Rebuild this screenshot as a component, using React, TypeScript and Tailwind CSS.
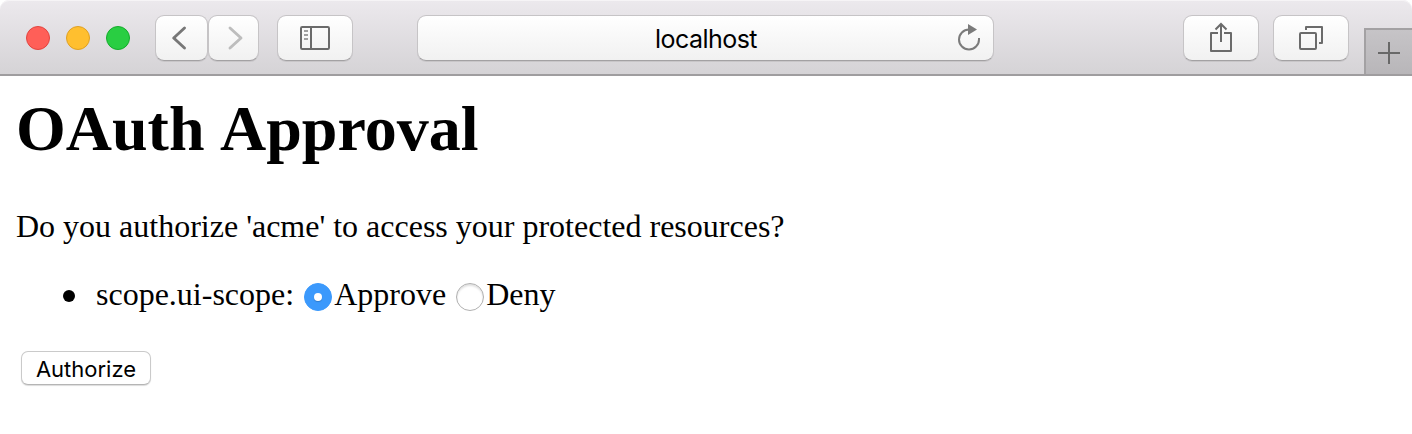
import { useState } from "react";
import type { ReactNode } from "react";

const face =
  "shrink-0 h-[46px] rounded-[9px] border border-[#c6c4c6] border-b-[#a3a1a3] bg-linear-to-b from-white to-[#f1f1f1] bg-clip-padding shadow-[0_1px_0_rgba(0,0,0,0.08)] flex items-center justify-center";

function ToolButton({ className, label, children }: { className: string; label: string; children: ReactNode }) {
  return (
    <button type="button" aria-label={label} className={`${face} ${className}`}>
      {children}
    </button>
  );
}

function Toolbar() {
  return (
    <header className="flex h-[76px] items-start overflow-hidden rounded-t-[9px] border-b-2 border-[#9f9d9f] bg-linear-to-b from-[#ece9ed] to-[#d5d3d6] pl-[26px] shadow-[inset_0_1px_0_#f6f4f6]">
      <div className="mt-[26px] flex gap-4">
        <span className="size-6 rounded-full border border-[#e2443f] bg-[#ff5f58]" />
        <span className="size-6 rounded-full border border-[#dfa023] bg-[#ffbf2f]" />
        <span className="size-6 rounded-full border border-[#14ac2b] bg-[#29ce42]" />
      </div>
      <div className="mt-[15px] ml-[25px] flex">
        <ToolButton label="Back" className="w-[53px]">
          <svg width="50" height="44" viewBox="0 0 50 44" fill="none" stroke="#777" strokeWidth="2.9" strokeLinecap="round" strokeLinejoin="round">
            <path d="M27.5 12 L16.7 22 L27.5 32" />
          </svg>
        </ToolButton>
        <ToolButton label="Forward" className="w-[51px]">
          <svg width="48" height="44" viewBox="0 0 48 44" fill="none" stroke="#bdbdbd" strokeWidth="2.9" strokeLinecap="round" strokeLinejoin="round">
            <path d="M20 12 L31 22 L20 32" />
          </svg>
        </ToolButton>
      </div>
      <ToolButton label="Sidebar" className="mt-[15px] ml-[18px] w-[76px]">
        <svg width="30" height="24" viewBox="0 0 30 24" fill="none" stroke="#6b6b6b" strokeWidth="2">
          <rect x="1" y="1" width="28" height="22" rx="1.2" />
          <path d="M11 1V23" />
          <path d="M4 5H8M4 9H8M4 13H8" stroke="#a0a0a0" />
        </svg>
      </ToolButton>
      <div className={`${face} mt-[15px] ml-16 w-[577px] pl-[37px]`}>
        <span className="flex-1 pt-0.5 text-center font-['Inter',sans-serif] text-[25px] tracking-[-0.55px] text-black">localhost</span>
        <svg className="mr-3 mb-0.5" width="24" height="28" viewBox="0 0 24 28" fill="none">
          <path d="M12 6.5A10 10 0 1 0 22 16.5V15" stroke="#7b7b7b" strokeWidth="2" />
          <path d="M11 1V12L20 6.5Z" fill="#7b7b7b" />
        </svg>
      </div>
      <ToolButton label="Share" className="mt-[15px] ml-[189px] w-[76px]">
        <svg width="24" height="32" viewBox="0 0 24 32" fill="none" stroke="#6b6b6b" strokeWidth="2">
          <path d="M9 11H2V29H22V11H15" strokeLinejoin="round" />
          <path d="M12 20V2" />
          <path d="M6.5 7.5L12 2L17.5 7.5" />
        </svg>
      </ToolButton>
      <ToolButton label="Show all tabs" className="mt-[15px] ml-[14px] w-[76px]">
        <svg width="26" height="26" viewBox="0 0 26 26" fill="none" stroke="#6b6b6b" strokeWidth="2">
          <rect x="2" y="8" width="16" height="16" rx="1" />
          <path d="M8 5V2H24V18H21" strokeLinejoin="round" />
        </svg>
      </ToolButton>
      <button type="button" aria-label="New tab" className="mt-7 ml-[15px] flex h-[46px] w-12 shrink-0 items-center justify-center border-t-2 border-l-2 border-[#a3a1a3] bg-linear-to-b from-[#c6c4c7] to-[#b8b6b9]">
        <svg width="22" height="22" viewBox="0 0 22 22" className="mt-0.5" stroke="#686868" strokeWidth="2">
          <path d="M11 0V22M0 11H22" />
        </svg>
      </button>
    </header>
  );
}

function Radio({ checked, onChange, children, className }: { checked: boolean; onChange: () => void; children: ReactNode; className: string }) {
  return (
    <label className={`flex items-center ${className}`}>
      <input type="radio" name="scope" checked={checked} onChange={onChange} className="peer sr-only" />
      <span className="mt-[5px] mr-[2px] flex size-7 items-center justify-center rounded-full border border-[#b0b0b0] bg-white shadow-[inset_0_2px_2px_rgba(0,0,0,0.12)] peer-checked:border-[#3b99fc] peer-checked:bg-[#3b99fc] peer-checked:shadow-none">
        {checked && <span className="size-2 rounded-full bg-white shadow-[0_1px_1px_rgba(0,0,0,0.2)]" />}
      </span>
      {children}
    </label>
  );
}

export default function App() {
  const [approved, setApproved] = useState(true);
  return (
    <div className="h-[434px] w-[1412px] overflow-hidden bg-white font-['Liberation_Serif',serif] text-[32px] leading-9 text-black">
      <Toolbar />
      <main className="px-4 pt-[17px]">
        <h1 className="text-[64px] leading-[72px] font-bold [word-spacing:3px]">OAuth Approval</h1>
        <p className="mt-[43px]">Do you authorize 'acme' to access your protected resources?</p>
        <ul className="mt-8 pl-[47px]">
          <li className="flex items-center">
            <span className="mr-[21px] mt-[3px] size-3 rounded-full bg-black" />
            <span>scope.ui-scope:</span>
            <Radio className="ml-[10px]" checked={approved} onChange={() => setApproved(true)}>Approve</Radio>
            <Radio className="ml-[10px]" checked={!approved} onChange={() => setApproved(false)}>Deny</Radio>
          </li>
        </ul>
        <button type="button" className="mt-[39px] ml-[5px] flex h-[34px] w-[130px] items-center justify-center rounded-[7px] border border-[#cacaca] border-b-[#b5b5b5] bg-white pt-0.5 font-['Inter',sans-serif] text-[22px] shadow-[0_1px_1px_rgba(0,0,0,0.14)]">
          Authorize
        </button>
      </main>
    </div>
  );
}
